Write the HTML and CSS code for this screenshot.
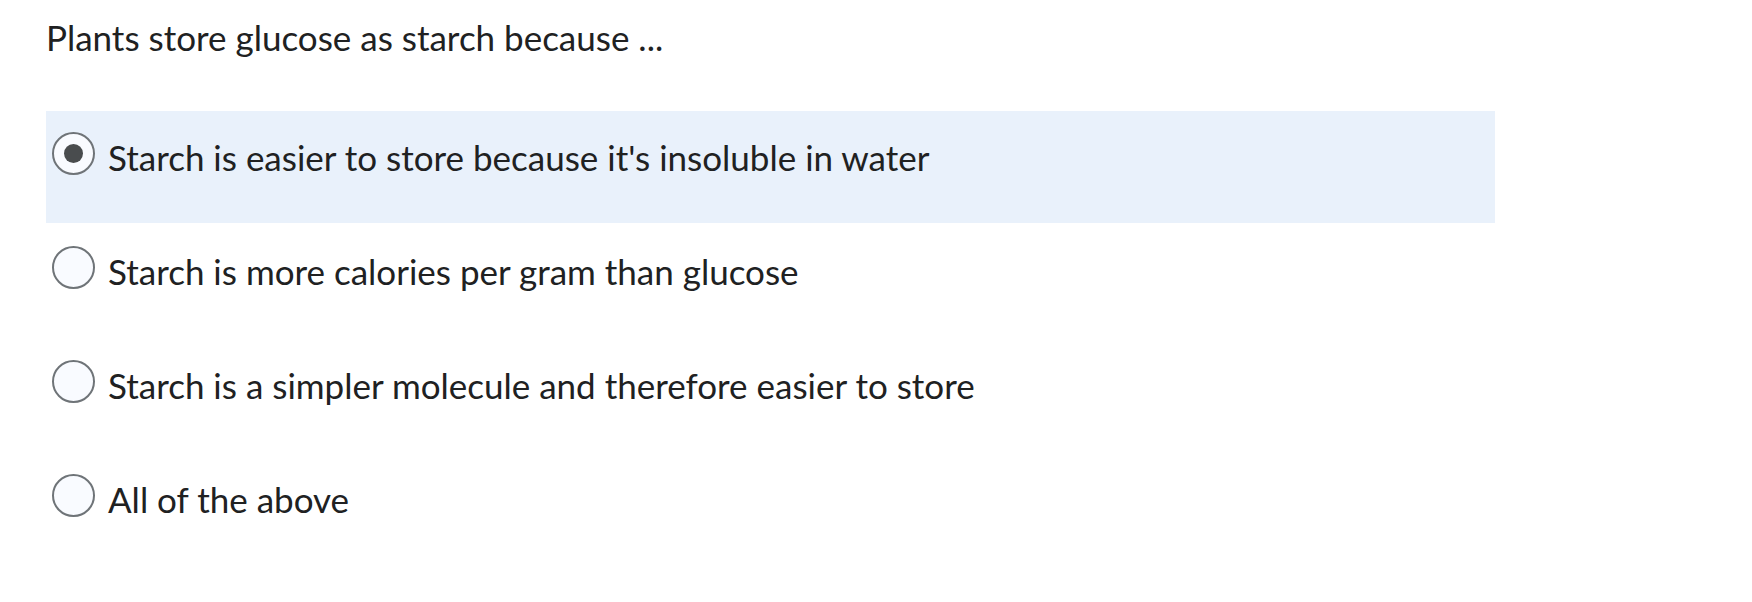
FILE: index.html
```html
<!DOCTYPE html>
<html lang="en">
<head>
<meta charset="utf-8">
<link rel="stylesheet" href="styles.css">
</head>
<body>
<div class="question">
  <div class="prompt">Plants store glucose as starch because ...</div>
  <div class="options">
    <label class="option selected"><span class="radio checked"></span><span class="label">Starch is easier to store because it's insoluble in water</span></label>
    <label class="option"><span class="radio"></span><span class="label">Starch is more calories per gram than glucose</span></label>
    <label class="option"><span class="radio"></span><span class="label">Starch is a simpler molecule and therefore easier to store</span></label>
    <label class="option"><span class="radio"></span><span class="label">All of the above</span></label>
  </div>
</div>
</body>
</html>
```
FILE: styles.css
```css
html, body {
  margin: 0;
  padding: 0;
  background: #ffffff;
}
body {
  font-family: Lato, "Noto Sans", sans-serif;
  color: #202122;
}
.question {
  padding: 17px 0 0 46px;
  width: 1449px;
}
.prompt {
  font-size: 35px;
  line-height: 40px;
  margin-bottom: 54px;
}
.options {
  display: flex;
  flex-direction: column;
  gap: 2px;
}
.option {
  display: flex;
  align-items: flex-start;
  gap: 13px;
  height: 112px;
  box-sizing: border-box;
  padding: 21px 6px 0;
  font-size: 35px;
}
.option.selected {
  background: #e9f1fb;
}
.radio {
  width: 43px;
  height: 43px;
  box-sizing: border-box;
  border: 2px solid #6f7478;
  border-radius: 50%;
  background: #f9fbff;
  display: flex;
  align-items: center;
  justify-content: center;
  flex: none;
}
.radio.checked::after {
  content: "";
  width: 19px;
  height: 19px;
  border-radius: 50%;
  background: #494c4e;
}
.label {
  line-height: 43px;
  margin-top: 4px;
}
```
